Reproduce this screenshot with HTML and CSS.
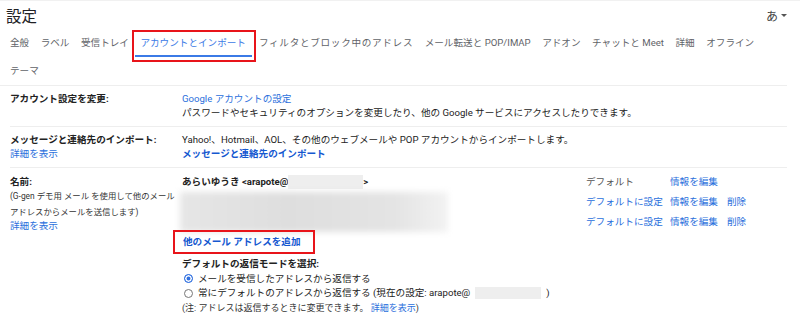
FILE: index.html
```html
<!DOCTYPE html>
<html lang="ja">
  <head>
    <meta charset="UTF-8" />
    <title>設定</title>
    <link rel="stylesheet" href="styles.css">
  </head>
  <body>
    <div class="header">
      <h1>設定</h1>
      <div class="lang">あ <span class="caret"></span></div>
    </div>

    <div class="tabs">
      <span class="tab">全般</span>
      <span class="tab">ラベル</span>
      <span class="tab">受信トレイ</span>
      <span class="tab active">アカウントとインポート</span>
      <span class="tab wide">フィルタとブロック中のアドレス</span>
      <span class="tab">メール転送と POP/IMAP</span>
      <span class="tab">アドオン</span>
      <span class="tab">チャットと Meet</span>
      <span class="tab">詳細</span>
      <span class="tab">オフライン</span>
      <span class="tab">テーマ</span>
    </div>

    <div class="settings">
      <div class="row">
        <div class="label"><b>アカウント設定を変更:</b></div>
        <div class="value">
          <a class="link">Google アカウントの設定</a><br />
          パスワードやセキュリティのオプションを変更したり、他の Google サービスにアクセスしたりできます。
        </div>
      </div>

      <div class="row">
        <div class="label">
          <b>メッセージと連絡先のインポート:</b><br />
          <a class="link">詳細を表示</a>
        </div>
        <div class="value">
          Yahoo!、Hotmail、AOL、その他のウェブメールや POP アカウントからインポートします。<br />
          <a class="link strong">メッセージと連絡先のインポート</a>
        </div>
      </div>

      <div class="row last">
        <div class="label names">
          <b class="name-title">名前:</b>
          <span class="small">(G-gen デモ用 メール を使用して他のメール<br />アドレスからメールを送信します)</span>
          <a class="link more">詳細を表示</a>
        </div>
        <div class="value">
          <div class="accounts">
            <div class="addr">
              <div class="addr-line"><b>あらいゆうき &lt;arapote@<span class="redact"></span>&gt;</b></div>
              <div class="blur"></div>
            </div>
            <div class="actions">
              <div class="act"><span class="a1 muted">デフォルト</span><a class="link a2">情報を編集</a></div>
              <div class="act"><a class="link a1">デフォルトに設定</a><a class="link a2">情報を編集</a><a class="link">削除</a></div>
              <div class="act"><a class="link a1">デフォルトに設定</a><a class="link a2">情報を編集</a><a class="link">削除</a></div>
            </div>
          </div>

          <div class="add"><a class="link strong add-link">他のメール アドレスを追加</a></div>

          <div class="reply">
            <b>デフォルトの返信モードを選択:</b>
            <label class="radio"><span class="dot on"></span>メールを受信したアドレスから返信する</label>
            <label class="radio"><span class="dot"></span>常にデフォルトのアドレスから返信する (現在の設定: arapote@<span class="redact small-redact"></span>)</label>
            <div class="note">(注: アドレスは返信するときに変更できます。 <a class="link">詳細を表示</a>)</div>
          </div>
        </div>
      </div>
    </div>
  </body>
</html>
```

FILE: styles.css
```css
body {
  margin: 0;
  font-family: "Roboto", "Noto Sans CJK JP", sans-serif;
  font-size: 9.6px;
  color: #222;
  background-color: #fff;
  border-top: 1px solid #f1f1f1;
}
b {
  font-weight: bold;
}
.header {
  display: flex;
  justify-content: space-between;
  align-items: center;
  height: 28px;
  padding: 0 13px 0 6px;
}
h1 {
  margin: 0;
  font-size: 15.5px;
  font-weight: normal;
  color: #202124;
}
.lang {
  font-size: 12px;
  color: #444;
  display: flex;
  align-items: center;
  gap: 3px;
}
.caret {
  width: 0;
  height: 0;
  border-left: 3px solid transparent;
  border-right: 3px solid transparent;
  border-top: 3px solid #555;
}
.tabs {
  display: flex;
  flex-wrap: wrap;
  column-gap: 11.5px;
  padding: 0 0 0 10px;
  margin-right: 13px;
  border-bottom: 1px solid #eee;
  font-size: 9.6px;
}
.tab {
  line-height: 28px;
  color: #5f6368;
  white-space: nowrap;
}
.tab.wide {
  letter-spacing: 0.7px;
}
.tab.active {
  position: relative;
  color: #3b7ae6;
  margin-right: 1.5px;
}
.tab.active::before {
  content: "";
  position: absolute;
  left: -5px;
  right: -6px;
  bottom: 0;
  height: 2px;
  background-color: #3b7ae6;
}
.tab.active::after {
  content: "";
  position: absolute;
  left: -8px;
  right: -10px;
  top: 1px;
  bottom: -5px;
  border: 2px solid #e8141a;
}
.settings {
  margin: 0 13px 0 10px;
}
.row {
  display: grid;
  grid-template-columns: 172px 1fr;
  border-bottom: 1px solid #eee;
  padding: 6px 0 6px;
  line-height: 14px;
}
.row.last {
  border-bottom: none;
  padding-top: 4px;
}
.link {
  color: #2a6fdc;
  cursor: pointer;
}
.link.strong {
  color: #1558d0;
  font-weight: bold;
}
.names {
  display: flex;
  flex-direction: column;
  padding-top: 3px;
}
.name-title {
  line-height: 13px;
}
.small {
  font-size: 8.4px;
  line-height: 16px;
  color: #333;
  white-space: nowrap;
}
.more {
  line-height: 12px;
}
.accounts {
  display: flex;
}
.addr {
  flex: 1;
}
.addr-line {
  line-height: 20px;
}
.redact {
  display: inline-block;
  width: 75px;
  height: 14px;
  vertical-align: middle;
  background-color: #eeeeee;
}
.small-redact {
  width: 66px;
  height: 12px;
}
.blur {
  width: 268px;
  height: 40px;
  margin-left: -2px;
  background: linear-gradient(90deg, #e6e6e6, #dedede 40%, #e4e4e4 80%, #f2f2f2);
  filter: blur(3px);
}
.actions {
  width: 201px;
}
.act {
  line-height: 20px;
  white-space: nowrap;
}
.a1 {
  display: inline-block;
  width: 84px;
}
.a2 {
  display: inline-block;
  width: 57px;
}
.muted {
  color: #555;
}
.add {
  padding-top: 2px;
}
.add-link {
  position: relative;
  display: inline-block;
  line-height: 16px;
  margin-left: 1px;
}
.add-link::after {
  content: "";
  position: absolute;
  left: -10px;
  right: -14px;
  top: -4px;
  bottom: -4px;
  border: 2px solid #e8141a;
}
.reply {
  margin-top: 7px;
  line-height: 14.5px;
}
.radio {
  display: flex;
  align-items: center;
  gap: 5px;
}
.dot {
  width: 7px;
  height: 7px;
  border-radius: 50%;
  border: 1px solid #777;
  margin-left: 2px;
  box-sizing: content-box;
}
.dot.on {
  border-color: #2f6fe0;
  background-color: #2f6fe0;
  box-shadow: inset 0 0 0 1.5px #fff;
}
.note {
  font-size: 9px;
  color: #333;
}
```
